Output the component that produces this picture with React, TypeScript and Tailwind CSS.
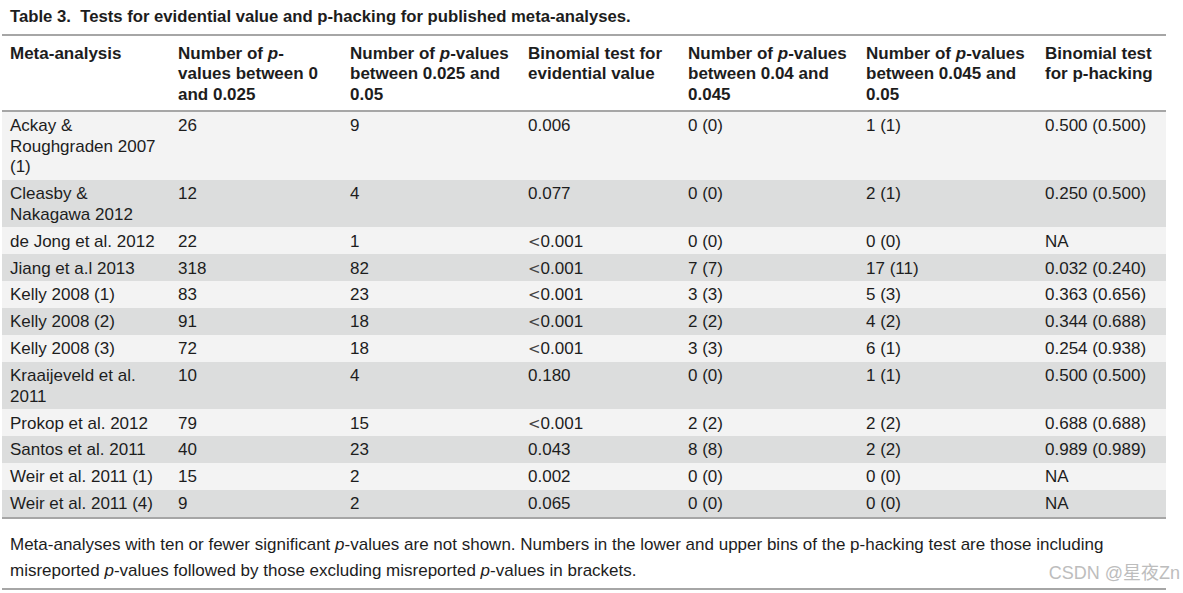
const cols = "grid grid-cols-[168px_172px_178px_160px_178px_179px_129px]";

type Row = { lines: string[]; vals: string[] };

const rows: Row[] = [
  { lines: ["Ackay &", "Roughgraden 2007", "(1)"], vals: ["26", "9", "0.006", "0 (0)", "1 (1)", "0.500 (0.500)"] },
  { lines: ["Cleasby &", "Nakagawa 2012"], vals: ["12", "4", "0.077", "0 (0)", "2 (1)", "0.250 (0.500)"] },
  { lines: ["de Jong et al. 2012"], vals: ["22", "1", "<0.001", "0 (0)", "0 (0)", "NA"] },
  { lines: ["Jiang et a.l 2013"], vals: ["318", "82", "<0.001", "7 (7)", "17 (11)", "0.032 (0.240)"] },
  { lines: ["Kelly 2008 (1)"], vals: ["83", "23", "<0.001", "3 (3)", "5 (3)", "0.363 (0.656)"] },
  { lines: ["Kelly 2008 (2)"], vals: ["91", "18", "<0.001", "2 (2)", "4 (2)", "0.344 (0.688)"] },
  { lines: ["Kelly 2008 (3)"], vals: ["72", "18", "<0.001", "3 (3)", "6 (1)", "0.254 (0.938)"] },
  { lines: ["Kraaijeveld et al.", "2011"], vals: ["10", "4", "0.180", "0 (0)", "1 (1)", "0.500 (0.500)"] },
  { lines: ["Prokop et al. 2012"], vals: ["79", "15", "<0.001", "2 (2)", "2 (2)", "0.688 (0.688)"] },
  { lines: ["Santos et al. 2011"], vals: ["40", "23", "0.043", "8 (8)", "2 (2)", "0.989 (0.989)"] },
  { lines: ["Weir et al. 2011 (1)"], vals: ["15", "2", "0.002", "0 (0)", "0 (0)", "NA"] },
  { lines: ["Weir et al. 2011 (4)"], vals: ["9", "2", "0.065", "0 (0)", "0 (0)", "NA"] },
];

function P() {
  return <i>p</i>;
}

function Lt({ v }: { v: string }) {
  if (v.startsWith("<")) {
    return (
      <>
        <span className="font-['DejaVu_Sans',sans-serif] text-[15px] text-[#444]">&lt;</span>
        {v.slice(1)}
      </>
    );
  }
  return <>{v}</>;
}

export default function App() {
  return (
    <div className="relative w-[1183px] h-[593px] bg-white text-[#1d1d1d] font-['Liberation_Sans',Arial,sans-serif] text-[17px] leading-[20.5px]">
      <div className="h-[34px] flex items-center pl-[10px] text-[16.7px] font-bold">
        Table 3.&nbsp; Tests for evidential value and p-hacking for published meta-analyses.
      </div>
      <div className="ml-[2px] w-[1164px]">
        <div className={`${cols} border-t-2 border-b-2 border-[#a6a6a6] pt-[7.5px] pb-[5px] font-bold whitespace-nowrap`}>
          <div className="pl-[8px]">Meta-analysis</div>
          <div className="pl-[8px]">
            Number of <P />-<br />values between 0<br />and 0.025
          </div>
          <div className="pl-[8px]">
            Number of <P />-values<br />between 0.025 and<br />0.05
          </div>
          <div className="pl-[8px]">
            Binomial test for<br />evidential value
          </div>
          <div className="pl-[8px]">
            Number of <P />-values<br />between 0.04 and<br />0.045
          </div>
          <div className="pl-[8px]">
            Number of <P />-values<br />between 0.045 and<br />0.05
          </div>
          <div className="pl-[8px]">
            Binomial test<br />for p-hacking
          </div>
        </div>
        <div className="border-b-2 border-[#a6a6a6]">
          {rows.map((r, i) => (
            <div
              key={i}
              className={`${cols} pt-[4.4px] pb-[2px] whitespace-nowrap ${i % 2 === 0 ? "bg-[#f3f3f3]" : "bg-[#dcdddd]"}`}
            >
              <div className="pl-[8px]">
                {r.lines.map((l, j) => (
                  <div key={j}>{l}</div>
                ))}
              </div>
              {r.vals.map((v, j) => (
                <div key={j} className="pl-[8px]">
                  <Lt v={v} />
                </div>
              ))}
            </div>
          ))}
        </div>
        <div className="pt-[13px] pb-[4px] pl-[8px] leading-[26px] border-b-2 border-[#a6a6a6]">
          Meta-analyses with ten or fewer significant <P />-values are not shown. Numbers in the lower and upper bins of the p-hacking test are those including
          <br />
          misreported <P />-values followed by those excluding misreported <P />-values in brackets.
        </div>
      </div>
      <div className="absolute right-[3px] top-[561px] text-[18px] leading-[24px] text-[#bdbdbd] font-['Liberation_Sans','Noto_Sans_CJK_SC',sans-serif]">
        CSDN @星夜Zn
      </div>
    </div>
  );
}
